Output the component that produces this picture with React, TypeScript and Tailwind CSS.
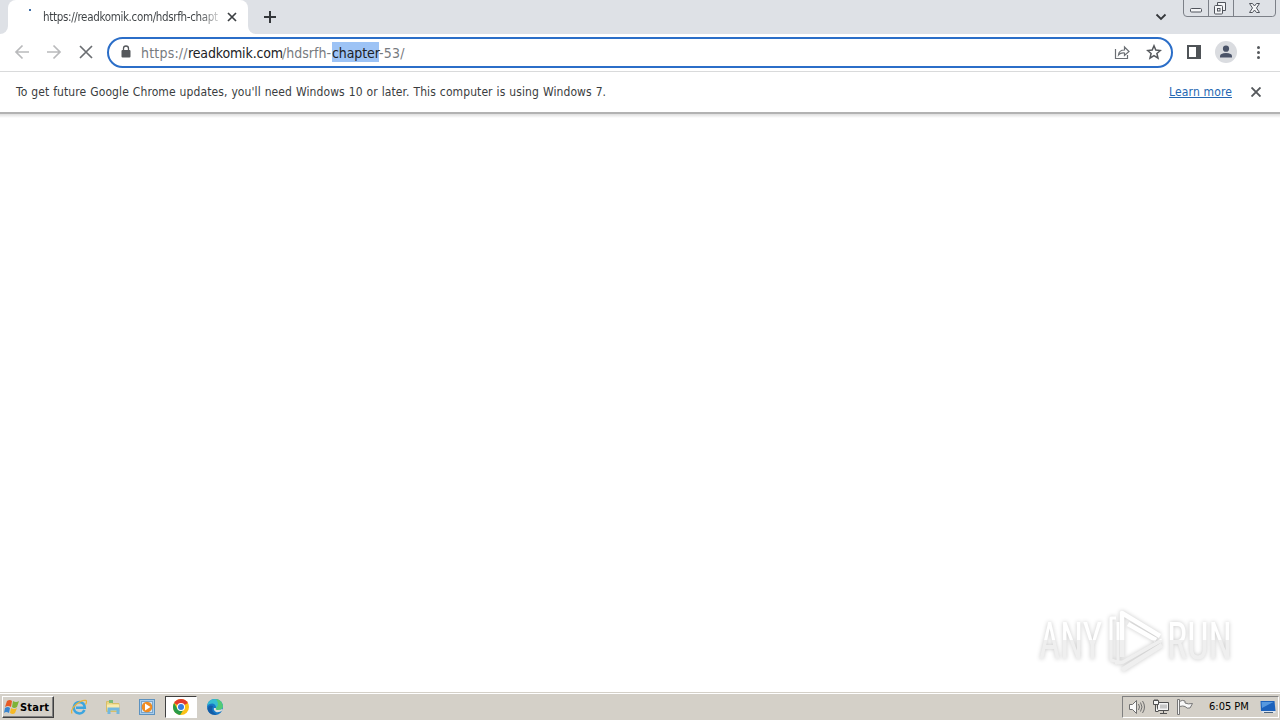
import React from 'react';

const TabStrip: React.FC = () => {
    return (
        <div className="flex h-[34px] items-start bg-[#dee1e6]">
            <div className="h-[34px] w-2 shrink-0 bg-white">
                <div className="h-full w-full rounded-br-lg bg-[#dee1e6]"></div>
            </div>
            <div className="flex h-[34px] w-60 shrink-0 items-center rounded-t-lg bg-white">
                <svg className="ml-3 h-4 w-4 shrink-0" viewBox="0 0 16 16">
                    <rect x="9" y="0" width="2" height="2" fill="#3f6ea8" />
                </svg>
                <p className="ml-[7px] w-[177px] shrink-0 bg-linear-to-r from-[#3c4043] from-88% to-[#e4e4e4] bg-clip-text text-[11.5px] leading-4 tracking-[-0.33px] whitespace-nowrap text-transparent">https://readkomik.com/hdsrfh-chapt</p>
                <svg className="ml-[7px] h-[10px] w-[10px] shrink-0" viewBox="0 0 10 10" stroke="#3c4043" strokeWidth="1.7">
                    <path d="M1 1 9 9M9 1 1 9" />
                </svg>
            </div>
            <div className="h-[34px] w-2 shrink-0 bg-white">
                <div className="h-full w-full rounded-bl-lg bg-[#dee1e6]"></div>
            </div>
            <svg className="mt-[11px] ml-2 h-3 w-3" viewBox="0 0 12 12" stroke="#34373b" strokeWidth="2">
                <path d="M6 0v12M0 6h12" />
            </svg>
            <svg className="mt-3 ml-auto h-[10px] w-3" viewBox="0 0 12 10" fill="none" stroke="#34373b" strokeWidth="1.8">
                <path d="m1.5 2.5 4.5 4.5 4.5-4.5" />
            </svg>
            <svg className="mr-[3px] ml-4 h-[18px] w-[94px]" viewBox="0 0 94 18" fill="none" stroke="#7c8088">
                <path d="M.5 0v13q0 3.500 3.500 3.500h85.500q3 0 3-3.500V0M25.500 0v16M50.500 0v16" />
                <rect x="7.500" y="8.500" width="11" height="3.500" rx="1" fill="#f4f5f7" stroke="#50545c" />
                <path d="M34.500 2.500h8v8h-3M34.500 2.500v3" fill="#f4f5f7" stroke="#50545c" />
                <rect x="31.500" y="5.500" width="8" height="8.500" rx="1" fill="#f4f5f7" stroke="#50545c" />
                <rect x="34.500" y="8.500" width="2.500" height="2.500" stroke="#50545c" />
                <path d="M66.500 3.500h3l2 2.500 2-2.500h3L73.500 8l3 4.500h-3l-2-2.500-2 2.500h-3l3-4.500z" fill="#f4f5f7" stroke="#50545c" />
            </svg>
        </div>
    );
};

const Toolbar: React.FC = () => {
    return (
        <div className="flex h-[38px] items-center border-b border-[#d9dadb] bg-white pb-px">
            <svg className="ml-[14px] h-4 w-4 shrink-0" viewBox="0 0 16 16" fill="none" stroke="#b9babc" strokeWidth="1.7">
                <path d="M15 8H2M8.500 1.500 2 8l6.500 6.500" />
            </svg>
            <svg className="ml-4 h-4 w-4 shrink-0" viewBox="0 0 16 16" fill="none" stroke="#b9babc" strokeWidth="1.700">
                <path d="M1 8h13M7.500 1.500 14 8l-6.500 6.500" />
            </svg>
            <svg className="ml-4 h-4 w-4 shrink-0" viewBox="0 0 16 16" stroke="#6b6e72" strokeWidth="1.7">
                <path d="m2 2 12 12M14 2 2 14" />
            </svg>
            <div className="ml-[13px] flex h-[31px] w-[1066px] shrink-0 items-center rounded-full border-2 border-[#2b6ec8] bg-white">
                <svg className="ml-3 h-[14px] w-[10px] shrink-0" viewBox="0 0 10 14">
                    <path d="M2.500 6V3.500a2.500 2.500 0 0 1 5 0V6" fill="none" stroke="#55585c" strokeWidth="1.3" />
                    <rect x=".5" y="5" width="9" height="7.500" rx="1" fill="#55585c" />
                </svg>
                <p className="ml-[10px] flex h-5 text-[14px] leading-[22px] whitespace-nowrap text-[#777b80]">
                    <span className="w-[47px] tracking-[0.2px]">https://</span>
                    <span className="w-[94px] tracking-[-0.14px] text-[#202124]">readkomik.com</span>
                    <span className="w-[50px]">/hdsrfh-</span>
                    <span className="w-[47px] bg-[#9dc3f5] tracking-[-0.1px] text-[#202124]">chapter</span>
                    <span className="tracking-[0.2px]">-53/</span>
                </p>
                <svg className="ml-auto h-4 w-4 shrink-0" viewBox="0 0 16 16" fill="none" stroke="#6b6f74" strokeWidth="1.2">
                    <path d="M1.500 5v9.500h12V11M4.500 11q.5-5 6-5V3l4.500 4.500-4.500 4V9q-4-.5-6 2z" />
                </svg>
                <svg className="mr-[9px] ml-4 h-4 w-4 shrink-0" viewBox="0 0 16 16" fill="none" stroke="#55585c" strokeWidth="1.5">
                    <path d="m8 1.800 1.800 4.300 4.600.4-3.500 3 1.100 4.600L8 11.600l-4 2.500 1.100-4.600-3.500-3 4.600-.4z" />
                </svg>
            </div>
            <svg className="ml-[14px] h-[14px] w-[14px] shrink-0" viewBox="0 0 14 14">
                <rect x="1" y="1" width="12" height="12" fill="none" stroke="#4f5357" strokeWidth="2" />
                <path d="M9 1h4v12H9z" fill="#4f5357" />
            </svg>
            <svg className="ml-[14px] h-[22px] w-[22px] shrink-0" viewBox="0 0 22 22">
                <circle cx="11" cy="11" r="11" fill="#dadce0" />
                <circle cx="11" cy="7.700" r="3.100" fill="#4a5368" />
                <path d="M5 16.500v-1.300q0-3 6-3.200 6 .2 6 3.200v1.300z" fill="#4a5368" />
            </svg>
            <svg className="ml-[19px] h-4 w-4 shrink-0" viewBox="0 0 16 16" fill="#55585c">
                <circle cx="2.500" cy="3.500" r="1.500" />
                <circle cx="2.500" cy="8.500" r="1.500" />
                <circle cx="2.500" cy="13.500" r="1.500" />
            </svg>
        </div>
    );
};

const UpdateBar: React.FC = () => {
    return (
        <div className="flex h-10 items-center bg-white pr-[19px] pl-4 text-[12px] text-[#3a3d40]">
            <p className="tracking-[0.09px] [word-spacing:0.43px] whitespace-nowrap">To get future Google Chrome updates, you'll need Windows 10 or later. This computer is using Windows 7.</p>
            <a className="ml-auto tracking-[0.14px] whitespace-nowrap text-[#2467b2] underline" href="#">Learn more</a>
            <svg className="ml-[19px] h-[10px] w-[10px] shrink-0" viewBox="0 0 10 10" stroke="#55585c" strokeWidth="1.9">
                <path d="m.5.5 9 9m0-9-9 9" />
            </svg>
        </div>
    );
};

const Watermark: React.FC = () => {
    return (
        <svg className="absolute right-[40px] bottom-[16px] h-[70px] w-[210px] overflow-visible drop-shadow-[0_0_2px_rgba(0,0,0,0.22)]" viewBox="0 0 210 70">
            <defs>
                <linearGradient id="fade" gradientUnits="userSpaceOnUse" x1="0" y1="0" x2="0" y2="70">
                    <stop offset="0.48" stopColor="#ffffff" />
                    <stop offset="0.48" stopColor="#efefef" />
                </linearGradient>
            </defs>
            <g className="font-['Roboto',sans-serif] text-[51px]" fill="url(#fade)">
                <text x="9" y="53" textLength="63" lengthAdjust="spacingAndGlyphs">ANY</text>
                <text x="137" y="53" textLength="65" lengthAdjust="spacingAndGlyphs">RUN</text>
            </g>
            <g fill="none" stroke="url(#fade)" strokeWidth="4.500" strokeLinejoin="round">
                <path d="M86 12h-5v42l7 2V16" strokeWidth="3" />
                <path d="M130 30 92 7v44" />
                <path d="m98 18 28 16" />
                <path d="m85 57 8-1 39-22" strokeWidth="3.500" />
                <path d="M92 64l40-25" />
            </g>
        </svg>
    );
};

const Taskbar: React.FC = () => {
    return (
        <div className="flex h-7 items-center border-t border-[#d4d0c8] bg-[#d4d0c8] shadow-[inset_0_1px_0_#ffffff]">
            <div className="mt-px ml-[2px] flex h-[22px] w-[52px] shrink-0 items-center border border-t-white border-r-[#404040] border-b-[#404040] border-l-white shadow-[inset_-1px_-1px_0_#808080]">
                <svg className="ml-px h-4 w-4 shrink-0" viewBox="0 0 16 16">
                    <path d="M3 2q3-2 5 0L7 8Q4 6 1 8z" fill="#e65b25" />
                    <path d="M9 2q3 2 6 0l-2 6q-3 2-5 0z" fill="#7eb338" />
                    <path d="M1 9q3-2 5 0l-1 5q-3-2-5 0z" fill="#3985cf" />
                    <path d="M7 9q3 2 6 0l-2 5q-2 2-5 0z" fill="#f6b925" />
                </svg>
                <span className="pt-px text-[11px] leading-4 font-bold tracking-[0.2px] text-black">Start</span>
            </div>
            <svg className="ml-[17px] h-4 w-4 shrink-0" viewBox="0 0 16 16" fill="none">
                <path d="M13.500 11q-2 4-6 3.300Q3 13.500 2.700 8.500 3.500 3 8.500 3q5 .5 5.300 5.700H5" stroke="#3ca5df" strokeWidth="2.500" />
                <path d="M1 14.500Q-1 11 5 5.500 11 .5 15 1.500q1.500 1-.5 4" stroke="#e9b33a" strokeWidth="1.300" />
            </svg>
            <svg className="ml-[18px] h-4 w-4 shrink-0" viewBox="0 0 16 16">
                <path d="M1.500 2.500h5l1 2h6.500v8H1.500z" fill="#ead681" stroke="#d8be68" />
                <path d="M4 1h4v3H4z" fill="#7bbb78" />
                <path d="M2 5.500h12v5H2z" fill="#f9ebac" />
                <path d="M2.500 8.500h12V15h-3v-3.500h-6V15h-3z" fill="#72b8df" />
            </svg>
            <svg className="ml-[18px] h-4 w-4 shrink-0" viewBox="0 0 16 16">
                <rect x=".5" y=".5" width="15" height="15" fill="#a9cdeb" stroke="#5c92c0" />
                <rect x="2.500" y="2.500" width="11" height="11" fill="#d1e4f3" stroke="#79a5cc" />
                <circle cx="8" cy="8" r="5.300" fill="#ef8c22" />
                <path d="m6 4.500 5.500 3.500L6 11.500z" fill="#ffffff" />
            </svg>
            <div className="mt-px ml-[10px] flex h-[22px] w-8 shrink-0 items-center justify-center border border-t-[#404040] border-r-white border-b-white border-l-[#404040] bg-white">
                <svg className="h-4 w-4" viewBox="0 0 16 16">
                    <circle cx="8" cy="8" r="8" fill="#fbc116" />
                    <path d="M8 8 1.100 4a8 8 0 0 1 13.800 0z" fill="#e33b2e" />
                    <path d="M1.100 4a8 8 0 0 0 6 12L11.500 9 8 12 4.500 10z" fill="#299b48" />
                    <circle cx="8" cy="8" r="4" fill="#ffffff" />
                    <circle cx="8" cy="8" r="3" fill="#367de0" />
                </svg>
            </div>
            <svg className="ml-[10px] h-4 w-4 shrink-0" viewBox="0 0 16 16">
                <circle cx="8" cy="8" r="8" fill="#1678c7" />
                <path d="M.2 7Q1 0 8 0q7 .5 8 7-.5 4-5 4-3 0-2-2Q9 5 5.500 4.500 1.500 4.500.2 7" fill="#36bdd1" />
                <path d="M9 0q6 1 7 7-.5 4-5 4-3 0-2-2 4-3 0-9" fill="#53ca76" />
                <path d="M6 7q-3 6 4 8.500-9 1-9.500-6Q2 5 6 7" fill="#145ca5" />
                <path d="M9 9q-1 2 2 2 3 0 4-1l1 1q-4 3-7 2-3-2-2-4z" fill="#e0e1dc" />
            </svg>
            <div className="mt-px mr-px ml-auto flex h-[22px] w-[157px] shrink-0 items-center border border-t-[#808080] border-r-white border-b-white border-l-[#808080]">
                <svg className="ml-[5px] h-4 w-[18px] shrink-0" viewBox="0 0 18 16" fill="none" stroke="#6f6f6f">
                    <path d="M1.500 5.500h3l4-4v13l-4-4h-3z" fill="#fafafa" />
                    <path d="M10.500 5q2 3 0 6M12.500 3.500q3 4.500 0 9M14.500 2q4 6 0 12" />
                </svg>
                <svg className="ml-[7px] h-4 w-4 shrink-0" viewBox="0 0 16 16" fill="#f4f4f4" stroke="#505050">
                    <path d="M4.500 3.500h11v8h-11zM7 14.500h7M10.500 12v2" />
                    <path d="M.5 1.500h5v4h-5zM2 0v2M4 0v2M2.500 6v6.500h3" />
                    <path d="M7 5.500h7v4H7z" fill="#c6c6c6" stroke="none" />
                </svg>
                <svg className="ml-2 h-4 w-4 shrink-0" viewBox="0 0 16 16" fill="#f8f8f8" stroke="#777777">
                    <path d="M2.500 2.500q3-2 5.500-.5v2q3 1.500 7.500.5l-2.500 4.500q-3 1-5-1.500-2-1-5.500 0z" />
                    <path d="M.5.5h2v15h-2z" />
                </svg>
                <span className="ml-4 w-[41px] pt-px text-[11px] whitespace-nowrap text-black">6:05 PM</span>
                <svg className="ml-[10px] h-4 w-4 shrink-0" viewBox="0 0 16 16">
                    <path d="M.5 2h14l1 10H1z" fill="#1c62bc" />
                    <path d="M1.500 3h12L2 9z" fill="#5799df" />
                    <path d="M1 12h14.500v2H3z" fill="#dce4ed" />
                    <path d="M4 13h9v1H4z" fill="#48627e" />
                </svg>
            </div>
        </div>
    );
};

const App: React.FC = () => {
    return (
        <div className="flex h-[720px] w-[1280px] flex-col overflow-hidden bg-white font-['DejaVu_Sans_Condensed','DejaVu_Sans',sans-serif] [font-stretch:condensed]">
            <TabStrip />
            <Toolbar />
            <UpdateBar />
            <div className="h-[6px] shrink-0 border-t-2 border-[#b2b2b2] bg-gradient-to-b from-[#dedede] to-white"></div>
            <div className="relative flex-1 bg-white">
                <Watermark />
            </div>
            <Taskbar />
        </div>
    );
};

export default App;
